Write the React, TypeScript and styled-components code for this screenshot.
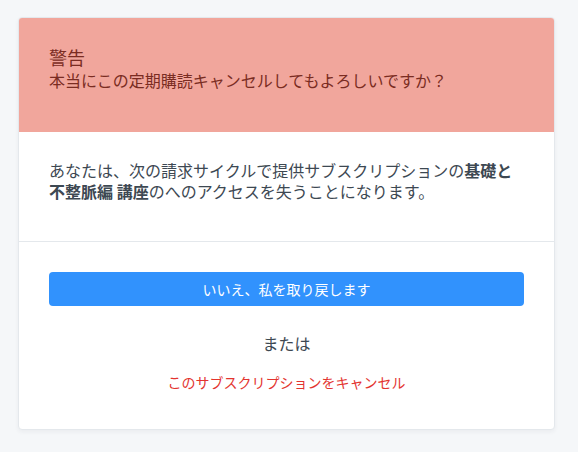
import React from "react";
import styled, { createGlobalStyle } from "styled-components";

const GlobalStyle = createGlobalStyle`
  html, body {
    margin: 0;
    padding: 0;
    background: #f5f7f9;
  }
  body {
    font-family: "Noto Sans CJK JP", "Noto Sans", sans-serif;
    color: #3d4852;
  }
`;

const Page = styled.div`
  padding: 17px 23px 22px 18px;
`;

const Card = styled.div`
  background: #ffffff;
  border: 1px solid #e4e8ec;
  border-radius: 4px;
  box-shadow: 0 2px 4px rgba(30, 40, 60, 0.05);
  overflow: hidden;
`;

const Header = styled.div`
  background: #f1a69c;
  color: #7a2c22;
  padding: 27px 30px 41px;
`;

const Title = styled.div`
  font-size: 18px;
  line-height: 24px;
`;

const Subtitle = styled.div`
  font-size: 16px;
  line-height: 22px;
`;

const Section = styled.div<{ $divider?: boolean }>`
  padding: 28px 30px 39px;
  border-bottom: ${(p) => (p.$divider ? "1px solid #e4e8ec" : "none")};
`;

const Message = styled.p`
  margin: 0;
  font-size: 16px;
  line-height: 21px;
  color: #3d4852;

  strong {
    font-weight: 700;
  }
`;

const Footer = styled.div`
  display: flex;
  flex-direction: column;
  align-items: center;
  padding: 30px 30px 37px;
`;

const PrimaryButton = styled.button`
  width: 100%;
  height: 34px;
  border: none;
  border-radius: 4px;
  background: #3192fd;
  color: #ffffff;
  font-family: inherit;
  font-size: 14px;
  cursor: pointer;
`;

const Or = styled.div`
  margin-top: 25px;
  font-size: 16px;
  line-height: 24px;
  color: #3d4852;
`;

const CancelLink = styled.a`
  margin-top: 17px;
  font-size: 14px;
  line-height: 20px;
  color: #e3342f;
  text-decoration: none;
  cursor: pointer;
`;

const App = () => {
  return (
    <Page>
      <GlobalStyle />
      <Card>
        <Header>
          <Title>警告</Title>
          <Subtitle>本当にこの定期購読キャンセルしてもよろしいですか？</Subtitle>
        </Header>
        <Section $divider>
          <Message>
            あなたは、次の請求サイクルで提供サブスクリプションの
            <strong>基礎と不整脈編 講座</strong>
            のへのアクセスを失うことになります。
          </Message>
        </Section>
        <Footer>
          <PrimaryButton>いいえ、私を取り戻します</PrimaryButton>
          <Or>または</Or>
          <CancelLink>このサブスクリプションをキャンセル</CancelLink>
        </Footer>
      </Card>
    </Page>
  );
};

export default App;
